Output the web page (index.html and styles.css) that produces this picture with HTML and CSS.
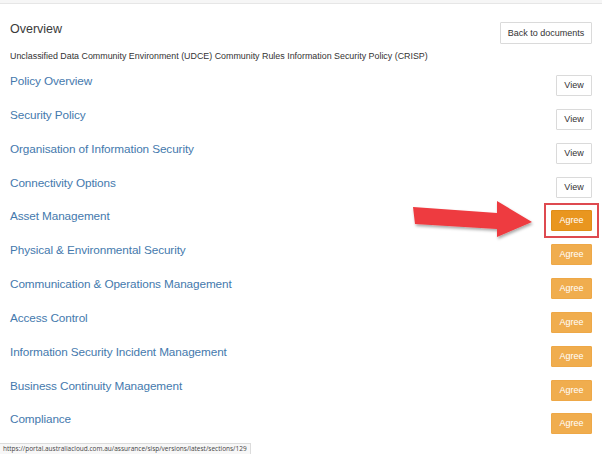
FILE: index.html
```html
<!DOCTYPE html>
<html>
<head>
<meta charset="utf-8">
<link rel="stylesheet" href="styles.css">
</head>
<body>
<div class="topbar"></div>
<main class="page">
  <div class="header">
    <h1 class="title">Overview</h1>
    <button class="btn btn-back">Back to documents</button>
  </div>
  <p class="subtitle">Unclassified Data Community Environment (UDCE) Community Rules Information Security Policy (CRISP)</p>
  <ul class="sections">
    <li class="row"><a class="link" href="#">Policy Overview</a><button class="btn btn-default">View</button></li>
    <li class="row"><a class="link" href="#">Security Policy</a><button class="btn btn-default">View</button></li>
    <li class="row"><a class="link" href="#">Organisation of Information Security</a><button class="btn btn-default">View</button></li>
    <li class="row"><a class="link" href="#">Connectivity Options</a><button class="btn btn-default">View</button></li>
    <li class="row"><a class="link" href="#">Asset Management</a><button class="btn btn-warning btn-active">Agree</button></li>
    <li class="row"><a class="link" href="#">Physical &amp; Environmental Security</a><button class="btn btn-warning">Agree</button></li>
    <li class="row"><a class="link" href="#">Communication &amp; Operations Management</a><button class="btn btn-warning">Agree</button></li>
    <li class="row"><a class="link" href="#">Access Control</a><button class="btn btn-warning">Agree</button></li>
    <li class="row"><a class="link" href="#">Information Security Incident Management</a><button class="btn btn-warning">Agree</button></li>
    <li class="row"><a class="link" href="#">Business Continuity Management</a><button class="btn btn-warning">Agree</button></li>
    <li class="row"><a class="link" href="#">Compliance</a><button class="btn btn-warning">Agree</button></li>
  </ul>
</main>
<svg class="annotation" width="602" height="454" viewBox="0 0 602 454">
  <defs>
    <filter id="sh" x="-10%" y="-30%" width="130%" height="160%">
      <feDropShadow dx="1" dy="2" stdDeviation="1.5" flood-color="#000" flood-opacity="0.35"/>
    </filter>
  </defs>
  <polygon points="413,207 497,213 497,201 532,222 497,237 497,229 415,224" fill="#ee3a3f" filter="url(#sh)"/>
  <rect x="545" y="204" width="53" height="33" fill="none" stroke="#de4a50" stroke-width="2"/>
</svg>
<div class="statusbar">https://portal.australiacloud.com.au/assurance/sisp/versions/latest/sections/129</div>
</body>
</html>
```
FILE: styles.css
```css
* { box-sizing: border-box; }
html, body {
  margin: 0;
  padding: 0;
  background: #fff;
  width: 602px;
  height: 454px;
  overflow: hidden;
  font-family: "Liberation Sans", Arial, sans-serif;
  color: #333;
}
body { position: relative; }
.topbar {
  height: 4px;
  background: #f6f6f6;
  border-bottom: 1px solid #e6e6e6;
}
.page {
  padding: 0 10px;
}
.header {
  display: flex;
  justify-content: space-between;
  align-items: flex-start;
  margin-top: 18px;
  height: 22px;
}
.title {
  margin: 0;
  font-size: 12.5px;
  line-height: 14px;
  font-weight: normal;
  color: #3a3a3a;
}
.subtitle {
  margin: 7px 0 0 0;
  font-size: 8.9px;
  line-height: 10px;
  color: #333;
}
.sections {
  list-style: none;
  margin: 11px 0 0 0;
  padding: 0;
}
.row {
  display: flex;
  justify-content: space-between;
  align-items: flex-start;
  height: 33.85px;
}
.link {
  display: block;
  padding-top: 2px;
  font-size: 11.75px;
  line-height: 14px;
  color: #4479ad;
  text-decoration: none;
  letter-spacing: -0.1px;
}
.btn {
  flex-shrink: 0;
  margin-top: 3px;
  height: 21px;
  padding: 0;
  font-family: "Liberation Sans", Arial, sans-serif;
  font-size: 9px;
  line-height: 19px;
  border-radius: 1px;
  border: 1px solid #dadada;
  background: #fff;
  color: #333;
  white-space: nowrap;
}
.btn-default { width: 36px; }
.btn-back {
  margin-top: 0;
  height: 22px;
  width: 92px;
  line-height: 20px;
}
.btn-warning {
  width: 41px;
  background: #f0ad4e;
  border-color: #eea847;
  color: #fff;
}
.btn-active {
  background: #e9961f;
  border-color: #e08e18;
}
.annotation {
  position: absolute;
  left: 0;
  top: 0;
  pointer-events: none;
}
.statusbar {
  position: absolute;
  left: 0;
  bottom: 0;
  height: 11px;
  padding: 0 3px;
  font-family: "Open Sans", "Noto Sans", sans-serif;
  font-size: 6.5px;
  line-height: 10px;
  color: #444;
  background: #f7f7f7;
  border: 1px solid #dcdcdc;
  border-left: 0;
  border-bottom: 0;
}
```
